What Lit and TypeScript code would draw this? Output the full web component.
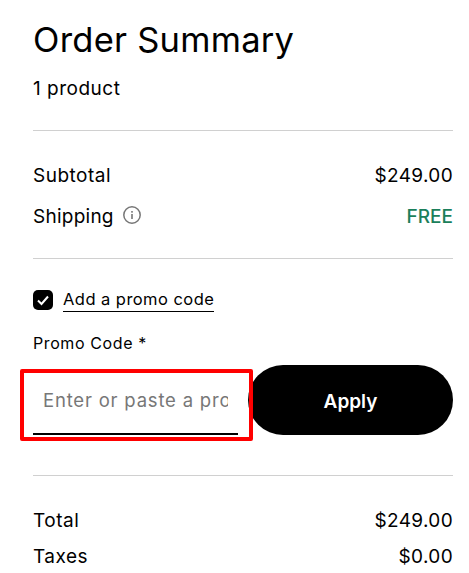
import { LitElement, html, css } from "lit";
import { customElement } from "lit/decorators.js";

@customElement("app-root")
export class AppRoot extends LitElement {
  static styles = css`
    :host {
      display: block;
      height: 573px;
      overflow: hidden;
      background: #fff;
      color: #000;
      font-family: "Inter", "Liberation Sans", sans-serif;
      font-size: 19px;
    }
    .page { padding: 16px 16px 0 33px; }
    h1 { margin: 0; font-size: 34.5px; line-height: 48px; font-weight: 400; letter-spacing: 0.25px; }
    .count { margin-top: 12px; line-height: 25px; letter-spacing: 0.5px; }
    hr { border: 0; border-top: 1px solid #d0d0d0; margin: 0; }
    .rule1 { margin-top: 29px; }
    .rows { padding: 32px 0 29px; display: flex; flex-direction: column; gap: 16px; }
    .row { display: flex; justify-content: space-between; align-items: center; line-height: 25px; letter-spacing: 0.5px; }
    .value { letter-spacing: 0.35px; }
    .ship { display: flex; align-items: center; gap: 8px; letter-spacing: 0.25px; }
    .ship svg { margin-bottom: 4px; }
    .free { color: #1b7f5b; font-weight: 500; letter-spacing: 0; }
    .promo { display: flex; align-items: center; gap: 10px; margin-top: 28px; }
    .box { width: 20px; height: 20px; background: #000; border-radius: 5px; display: flex; align-items: center; justify-content: center; }
    .promo-text { font-size: 16.5px; line-height: 24px; border-bottom: 1px solid #000; letter-spacing: 0.45px; }
    .label { margin-top: 19px; font-size: 16px; line-height: 24px; letter-spacing: 0.6px; }
    .form { display: grid; grid-template-columns: minmax(0, 1fr) minmax(0, 1fr); gap: 10px; margin-top: 10px; }
    .field { position: relative; height: 70px; box-sizing: border-box; border-bottom: 2px solid #000; padding: 2px 10px 0; display: flex; align-items: center; }
    .field::after { content: ""; position: absolute; left: -13px; right: -15px; top: 4px; bottom: -8px; border: 4px solid #f00; border-radius: 2px; z-index: 2; pointer-events: none; }
    .ph { width: 100%; overflow: hidden; white-space: nowrap; color: #777; font-size: 18.5px; letter-spacing: 0.8px; }
    .apply { height: 70px; border: 0; border-radius: 35px; background: #000; color: #fff; padding: 2px 0 0; font: 600 19px "Inter", "Liberation Sans", sans-serif; }
    .rule3 { margin-top: 40px; }
    .totals { padding-top: 32px; display: flex; flex-direction: column; gap: 11px; }
  `;

  render() {
    return html`<div class="page">
      <h1>Order Summary</h1>
      <div class="count">1 product</div>
      <hr class="rule1" />
      <div class="rows">
        <div class="row"><span>Subtotal</span><span class="value">$249.00</span></div>
        <div class="row">
          <span class="ship">Shipping
            <svg width="20" height="20" viewBox="0 0 20 20" fill="none">
              <circle cx="10" cy="10" r="8.2" stroke="#777" stroke-width="1.5" />
              <rect x="9.2" y="9" width="1.6" height="5" fill="#777" />
              <rect x="9.2" y="6" width="1.6" height="1.7" fill="#777" />
            </svg>
          </span>
          <span class="free">FREE</span>
        </div>
      </div>
      <hr />
      <div class="promo">
        <span class="box">
          <svg width="14" height="14" viewBox="0 0 14 14" fill="none">
            <path d="M2 7.5 L5.5 11 L12 3.5" stroke="#fff" stroke-width="2" />
          </svg>
        </span>
        <span class="promo-text">Add a promo code</span>
      </div>
      <div class="label">Promo Code *</div>
      <div class="form">
        <div class="field"><div class="ph">Enter or paste a promo code</div></div>
        <button class="apply">Apply</button>
      </div>
      <hr class="rule3" />
      <div class="totals">
        <div class="row"><span>Total</span><span class="value">$249.00</span></div>
        <div class="row"><span>Taxes</span><span class="value">$0.00</span></div>
      </div>
    </div>`;
  }
}
